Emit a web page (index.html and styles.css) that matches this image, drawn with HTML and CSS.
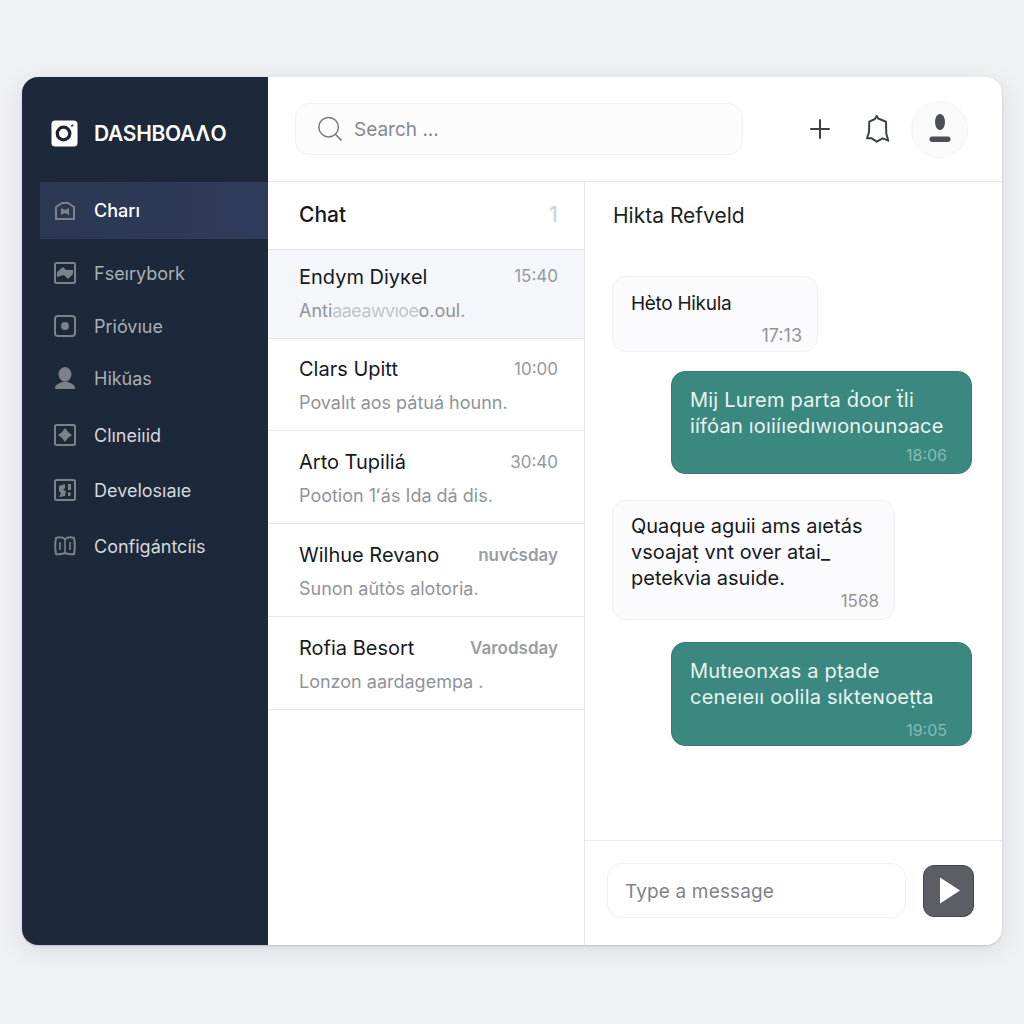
FILE: index.html
```html
<!DOCTYPE html>
<html lang="en">
<head>
<meta charset="utf-8">
<title>Dashboard</title>
<link rel="stylesheet" href="styles.css">
</head>
<body>
<div class="app">
  <aside class="sidebar">
    <div class="brand">
      <svg class="brand-icon" viewBox="0 0 28 28"><rect x="0.5" y="0.5" width="27" height="27" rx="4" fill="#fff"/><circle cx="13" cy="14" r="6.5" fill="none" stroke="#1c2433" stroke-width="3.4"/><path d="M21 6.5l2-1.5" stroke="#1c2433" stroke-width="1.6"/></svg>
      <span class="brand-name">DASHBOAɅO</span>
    </div>
    <nav class="nav">
      <a class="nav-item active">
        <svg class="nav-icon" viewBox="0 0 22 22"><path d="M2 7l6-4h6l6 4v12H2z" fill="none" stroke="currentColor" stroke-width="2"/><path d="M7 8l4 2 4-2v7l-4-2-4 2z" fill="currentColor"/></svg>
        <span>Charı</span>
      </a>
      <a class="nav-item">
        <svg class="nav-icon" viewBox="0 0 22 22"><rect x="1" y="1" width="20" height="20" rx="1.5" fill="none" stroke="currentColor" stroke-width="2"/><path d="M3 10l6-5 3 3h7v4l-5 5-4-4-7 2z" fill="currentColor"/></svg>
        <span>Fseırybork</span>
      </a>
      <a class="nav-item">
        <svg class="nav-icon" viewBox="0 0 22 22"><rect x="1" y="1" width="20" height="20" rx="3" fill="none" stroke="currentColor" stroke-width="2"/><circle cx="11" cy="11" r="4" fill="currentColor"/></svg>
        <span>Prióvıue</span>
      </a>
      <a class="nav-item">
        <svg class="nav-icon" viewBox="0 0 22 24"><ellipse cx="11" cy="8" rx="7" ry="8" fill="currentColor"/><path d="M0 23c0-4 5-5 8-7h6c3 2 8 3 8 7 0 1-1 1-2 1H2c-1 0-2 0-2-1z" fill="currentColor"/></svg>
        <span>Hikŭas</span>
      </a>
      <a class="nav-item">
        <svg class="nav-icon" viewBox="0 0 22 22"><rect x="1" y="1" width="20" height="20" rx="1.5" fill="none" stroke="currentColor" stroke-width="2"/><path d="M11 4l3 4 4 3-4 3-3 4-3-4-4-3 4-3z" fill="currentColor"/></svg>
        <span>Clıneiıid</span>
      </a>
      <a class="nav-item">
        <svg class="nav-icon" viewBox="0 0 22 22"><rect x="1" y="1" width="20" height="20" rx="1.5" fill="none" stroke="currentColor" stroke-width="2"/><path d="M5 7l6-2v4l-2 2 3 1-1 5-6 1 2-4-2-2zM14 5h3v6h-3zM14 13l3 1-1 3h-2z" fill="currentColor"/></svg>
        <span>Develosıaıe</span>
      </a>
      <a class="nav-item">
        <svg class="nav-icon" viewBox="0 0 22 22"><path d="M2 3c3-1 6-1 9 1 3-2 6-2 9-1 1 5 1 11 0 16-3 1-6 0-9-1-3 1-6 2-9 1-1-5-1-11 0-16z" fill="none" stroke="currentColor" stroke-width="2"/><path d="M11 4v14M6 7v8M16 7v8" stroke="currentColor" stroke-width="1.6"/></svg>
        <span>Configántcíis</span>
      </a>
    </nav>
  </aside>

  <div class="main">
    <header class="topbar">
      <div class="search">
        <svg class="search-icon" viewBox="0 0 28 28"><circle cx="12.5" cy="12" r="10.5" fill="none" stroke="currentColor" stroke-width="1.6"/><path d="M20 20l6 6" stroke="currentColor" stroke-width="1.6" stroke-linecap="round"/></svg>
        <span>Search ...</span>
      </div>
      <div class="actions">
        <svg class="icon-plus" viewBox="0 0 20 20"><path d="M10 1v18M1 10h18" stroke="#3d4148" stroke-width="2" stroke-linecap="round"/></svg>
        <svg class="icon-bell" viewBox="0 0 24 28"><path d="M10.700 1l1.500 2.500L20 6.700l.3 12 2 7-5.600-2.400-6 3.400-5-3.400L1 23.300l2-6 .3-10.600L9 4z" fill="none" stroke="#3d4148" stroke-width="2" stroke-linejoin="round"/></svg>
        <div class="avatar">
          <svg class="avatar-icon" viewBox="0 0 22 30"><ellipse cx="11" cy="8" rx="5" ry="8" fill="#4c4f56"/><rect x="0.500" y="22.500" width="21" height="5.500" rx="2.750" fill="#4c4f56"/></svg>
        </div>
      </div>
    </header>

    <div class="content">
      <section class="list">
        <div class="list-head"><h2>Chat</h2><span class="count">1</span></div>
        <div class="row selected">
          <div class="row-top"><span class="name">Endym Diyкel</span><span class="time">15:40</span></div>
          <p class="preview">Anti<span class="smudge">aaeawvıoe</span>o.oul.</p>
        </div>
        <div class="row second">
          <div class="row-top"><span class="name">Clars Upitt</span><span class="time">10:00</span></div>
          <p class="preview">Povalıt aos pátuá hounn.</p>
        </div>
        <div class="row tall">
          <div class="row-top"><span class="name">Arto Tupiliá</span><span class="time">30:40</span></div>
          <p class="preview">Pootion 1ʻás Ida dá dis.</p>
        </div>
        <div class="row tall">
          <div class="row-top"><span class="name">Wilhue Revano</span><span class="time day">nuvċsday</span></div>
          <p class="preview">Sunon aŭtòs alotoria.</p>
        </div>
        <div class="row tall">
          <div class="row-top"><span class="name">Rofia Besort</span><span class="time day">Varodsday</span></div>
          <p class="preview">Lonzon aardagempa .</p>
        </div>
      </section>

      <section class="chat">
        <div class="chat-head">Hikta Refveld</div>
        <div class="messages">
          <div class="msg in m1"><p>Hèto Hikula</p><span class="stamp">17:13</span></div>
          <div class="msg out m2"><p>Mij Lurem parta ḋoor ẗli<br>iífóan ıoıiíıedıwıonounɔace</p><span class="stamp">18:06</span></div>
          <div class="msg in m3"><p>Quaque aguii ams aıetás<br>vsoajaṭ vnt over atai_<br>petekvia asuide.</p><span class="stamp">1568</span></div>
          <div class="msg out m4"><p>Mutıeonxas a pṭade<br>ceneıeıı oolila sıkteɴoeṭta</p><span class="stamp">19:05</span></div>
        </div>
        <div class="composer">
          <div class="input">Type a message</div>
          <button class="send" type="button"><svg viewBox="0 0 20 26"><path d="M0 0l20 13L0 26z" fill="#fff"/></svg></button>
        </div>
      </section>
    </div>
  </div>
</div>
</body>
</html>
```
FILE: styles.css
```css
* { box-sizing: border-box; }
html, body { height: 100%; }
body {
  margin: 0;
  background: #f0f1f4;
  font-family: Inter, "Noto Sans", sans-serif;
  padding: 77px 22px 79px;
}
.app {
  display: flex;
  height: 868px;
  background: #fff;
  border-radius: 16px;
  overflow: hidden;
  box-shadow: 0 6px 24px rgba(30, 40, 60, .10), 0 1px 2px rgba(30, 40, 60, .18);
}
.sidebar {
  flex: 0 0 246px;
  background: #1d293b;
  padding-left: 18px;
}
.brand {
  display: flex;
  align-items: center;
  gap: 16px;
  height: 105px;
  padding: 7px 0 0 11px;
}
.brand-icon { width: 27px; height: 27px; }
.brand-name {
  color: #fff;
  font-size: 21px;
  font-weight: 600;
  letter-spacing: -.3px;
}
.nav { display: flex; flex-direction: column; }
.nav-item {
  display: flex;
  align-items: center;
  gap: 18px;
  height: 52px;
  padding-left: 14px;
  color: #aaaeb5;
  font-size: 18px;
}
.nav-icon { width: 22px; height: 22px; flex: none; color: #7d8189; }
.nav-item.active {
  height: 57px;
  background: linear-gradient(90deg, #2b3853, #2f3b5a);
  color: #fff;
  font-weight: 500;
  margin-bottom: 8px;
}
.nav-item:nth-child(3) { margin-top: 1px; }
.nav-item:nth-child(n+5) { color: #d6d8dc; }
.nav-item:nth-child(5) { margin-top: 5px; }
.nav-item:nth-child(6) { margin-top: 3px; }
.nav-item:nth-child(7) { margin-top: 4px; }
.main { flex: 1; display: flex; flex-direction: column; min-width: 0; }
.topbar {
  flex: 0 0 105px;
  display: flex;
  align-items: center;
  justify-content: space-between;
  padding: 0 34px 0 27px;
  border-bottom: 1px solid #e6e8eb;
}
.search {
  display: flex;
  align-items: center;
  gap: 11px;
  width: 448px;
  height: 52px;
  padding-left: 21px;
  background: #fcfcfd;
  border: 1px solid #f0f1f3;
  border-radius: 14px;
  color: #85898f;
  font-size: 19px;
}
.search-icon { width: 26px; height: 26px; color: #74787e; }
.actions { display: flex; align-items: center; }
.icon-plus { width: 20px; height: 20px; margin-right: 36px; }
.icon-bell { width: 24px; height: 28px; margin-right: 21px; }
.avatar {
  width: 57px;
  height: 57px;
  border-radius: 50%;
  background: #fafafb;
  border: 1px solid #f4f4f6;
  display: flex;
  align-items: center;
  justify-content: center;
}
.avatar-icon { width: 22px; height: 30px; }
.content { flex: 1; display: flex; min-height: 0; }
.list { flex: 0 0 317px; border-right: 1px solid #e6e8eb; }
.list-head {
  height: 68px;
  display: flex;
  align-items: center;
  justify-content: space-between;
  padding: 0 26px 2px 31px;
  border-bottom: 1px solid #e0e2e6;
}
.list-head h2 { margin: 0; font-size: 21px; font-weight: 500; color: #14171c; }
.count { font-size: 21px; font-weight: 600; color: #d3d5d8; }
.row {
  height: 89px;
  padding: 14px 26px 0 31px;
  border-bottom: 1px solid #e4e6e9;
}
.row.second { height: 92px; padding-top: 17px; }
.row.tall { height: 93px; padding-top: 18px; }
.row.selected { background: #f4f6fa; }
.row-top { display: flex; justify-content: space-between; align-items: center; height: 26px; }
.name { font-size: 20px; color: #16191e; }
.time { font-size: 17px; color: #95999e; }
.selected .time { margin-bottom: 3px; }
.time.day { font-weight: 600; color: #9a9da2; }
.preview { margin: 10px 0 0; font-size: 18px; color: #90949a; white-space: nowrap; }
.smudge { color: #c0c3c9; letter-spacing: -.6px; filter: blur(.6px); }
.chat { flex: 1; display: flex; flex-direction: column; min-width: 0; }
.chat-head { height: 68px; padding: 0 0 2px 28px; display: flex; align-items: center; font-size: 21px; color: #1c1f24; }
.messages { flex: 1; display: flex; flex-direction: column; padding: 26px 30px 0 27px; min-height: 0; }
.msg { position: relative; border-radius: 14px; font-size: 20px; }
.msg p { margin: 0; white-space: nowrap; }
.msg.in { align-self: flex-start; background: #fbfbfd; border: 1px solid #eff0f3; color: #16191e; padding: 12px 18px 0; }
.msg.out { align-self: flex-end; background: #3b8880; border: 1px solid #2f7f77; color: #e9f4f2; padding: 15px 18px 0; letter-spacing: .2px; }
.stamp { position: absolute; right: 15px; bottom: 5px; font-size: 17px; color: #90949a; letter-spacing: 0; }
.msg.out .stamp { color: #86bbb5; right: 24px; font-size: 16px; letter-spacing: 0; }
.msg.m1 { width: 206px; height: 76px; font-size: 19px; padding-top: 15px; }
.m1 p { letter-spacing: -.3px; }
.m1 .stamp { font-size: 18px; }
.m2 { width: 301px; height: 103px; margin-top: 19px; line-height: 26px; }
.m3 { width: 283px; height: 120px; margin-top: 26px; line-height: 26px; }
.m4 { width: 301px; height: 104px; margin-top: 22px; line-height: 26px; }
.msg.m4 .stamp { bottom: 2px; }
.composer {
  flex: 0 0 105px;
  display: flex;
  align-items: center;
  gap: 17px;
  padding: 0 28px 5px 22px;
  border-top: 1px solid #e9eaed;
}
.input {
  flex: 1;
  height: 55px;
  display: flex;
  align-items: center;
  padding: 1px 0 0 17px;
  background: #fff;
  border: 1px solid #f0f1f3;
  border-radius: 14px;
  color: #7f8389;
  font-size: 19px;
  letter-spacing: .15px;
}
.send {
  flex: none;
  width: 51px;
  height: 52px;
  padding: 0;
  background: #5c5e64;
  border: 1px solid #44464c;
  border-radius: 11px;
  display: flex;
  align-items: center;
  justify-content: center;
}
.send svg { width: 20px; height: 27px; margin-left: 3px; }
```
